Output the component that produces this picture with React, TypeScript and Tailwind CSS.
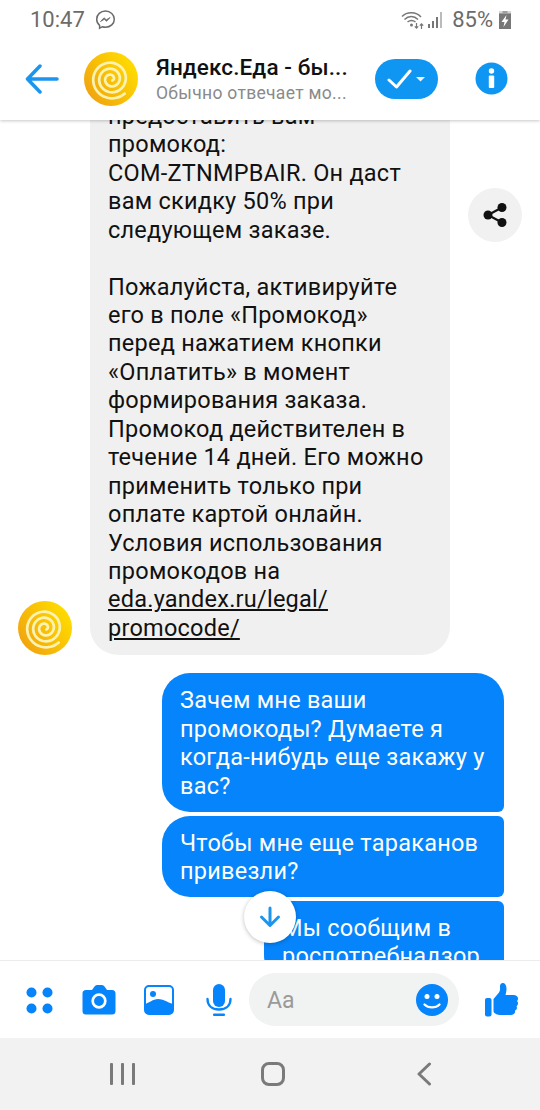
import React from "react";

const BLUE = "#0584fb";

function spiralPath() {
  // Archimedean spiral from the centre outwards, its tail ending low on the right
  const pts: string[] = [];
  const turns = 3;
  const steps = 160;
  const endAngle = Math.PI * 0.26;
  for (let i = 0; i <= steps; i++) {
    const t = i / steps;
    const a = endAngle + (1 - t) * turns * Math.PI * 2;
    const r = 2 + t * 18;
    pts.push(`${(27 + r * Math.cos(a)).toFixed(2)} ${(27 + r * Math.sin(a)).toFixed(2)}`);
  }
  return "M" + pts.join("L");
}

function Avatar({ id }: { id: string }) {
  return (
    <svg width={54} height={54} viewBox="0 0 54 54" className="shrink-0">
      <defs>
        <linearGradient id={id} x1="0.05" y1="0.9" x2="0.95" y2="0.25">
          <stop offset="0" stopColor="#f0a010" />
          <stop offset="1" stopColor="#ffdc00" />
        </linearGradient>
      </defs>
      <circle cx="27" cy="27" r="27" fill={`url(#${id})`} />
      <path d={spiralPath()} fill="none" stroke="#fdf2b0" strokeWidth="2.700" strokeLinecap="round" />
    </svg>
  );
}

function StatusBar() {
  return (
    <div className="h-[37px] flex items-center pl-[30px] pr-[28px] pt-[2px] text-[#6b6b6b] text-[22px] leading-none">
      <span>10:47</span>
      <svg width="21" height="21" viewBox="0 0 21 21" className="ml-[10px]">
        <path d="M10.5 2C5.5 2 1.7 5.6 1.7 10.2c0 2.5 1.1 4.6 2.9 6.1v2.9l2.7-1.5c1 .3 2.1.5 3.2.5 5 0 8.8-3.6 8.8-8S15.500 2 10.5 2Z" fill="none" stroke="#6b6b6b" strokeWidth="1.500" />
        <path d="m5.500 12.500 3.500-3.700 2.300 2 3.800-2.300-3.500 3.800-2.300-2-3.800 2.200Z" fill="#6b6b6b" stroke="#6b6b6b" strokeWidth="0.800" strokeLinejoin="round" />
      </svg>
      <div className="ml-auto flex items-center">
        <svg width="24" height="20" viewBox="0 0 24 20">
          <g fill="none" stroke="#777" strokeWidth="1.500">
            <path d="M1 6.500C6 1.500 15 1.500 20 7" />
            <path d="M3.500 9.500C7.500 5.500 13 5.500 17 9.500" />
            <path d="M6.500 12C9 10 12 10 14.500 12" />
          </g>
          <circle cx="10.500" cy="15" r="1.500" fill="#777" />
          <path d="M15.500 13v5M13.800 16.300l1.700 1.900 1.700-1.900M20.500 19v-5M18.800 15.700l1.700-1.900 1.700 1.900" fill="none" stroke="#777" strokeWidth="1.200" />
        </svg>
        <svg width="16" height="18" viewBox="0 0 16 18" className="ml-[2px]">
          <rect x="1" y="13" width="2" height="4" fill="#777" />
          <rect x="5" y="10" width="2" height="7" fill="#777" />
          <rect x="9" y="6" width="2" height="11" fill="#777" />
          <rect x="13" y="1" width="2" height="16" fill="#bbb" />
        </svg>
        <span className="ml-[9px]">85%</span>
        <svg width="14" height="20" viewBox="0 0 14 20" className="ml-[5px]">
          <path d="M4.500 1h5v2H13v16H1V3h3.500Z" fill="#777" />
          <path d="M1 1h12v3H1Z" fill="#bbb" opacity="0.600" />
          <path d="M8.500 5 3.500 12h3l-1 5 5-7.500h-3Z" fill="#fff" />
        </svg>
      </div>
    </div>
  );
}

function Header() {
  return (
    <div className="relative z-10 bg-white shadow-[0_1px_3px_rgba(0,0,0,0.22)]">
      <StatusBar />
      <div className="h-[83px] flex items-center">
        <svg width="34" height="30" viewBox="0 0 34 30" className="ml-[25px]">
          <path d="M32 15H3M15 2 2.500 15 15 28" fill="none" stroke="#1b95ee" strokeWidth="3.500" strokeLinecap="round" strokeLinejoin="round" />
        </svg>
        <div className="ml-[25px]"><Avatar id="spiral-head" /></div>
        <div className="ml-[18px] w-[219px]">
          <div className="text-[22.500px] leading-[28px] font-medium text-[#111] whitespace-nowrap tracking-[0.1px]">Яндекс.Еда - бы...</div>
          <div className="text-[17.500px] leading-[24px] text-[#8a8a8a] whitespace-nowrap tracking-[0.3px]">Обычно отвечает мо...</div>
        </div>
        <div className="w-[63px] h-[40px] rounded-full bg-[#0f96f2] flex items-center justify-center">
          <svg width="40" height="24" viewBox="0 0 40 24">
            <path d="M2 13l7.500 7L23 4" fill="none" stroke="#fff" strokeWidth="3" strokeLinecap="round" strokeLinejoin="round" />
            <path d="M29 10h9l-4.500 4.500Z" fill="#e8f4ff" />
          </svg>
        </div>
        <svg width="33" height="33" viewBox="0 0 33 33" className="ml-[37px]">
          <circle cx="16.500" cy="16.500" r="16" fill="#0f96f2" />
          <circle cx="16.500" cy="9" r="2.700" fill="#fff" />
          <rect x="13.800" y="13.500" width="5.400" height="12.500" rx="1" fill="#fff" />
        </svg>
      </div>
    </div>
  );
}

function Share() {
  return (
    <div className="ml-[18px] mt-[87px] w-[54px] h-[54px] rounded-full bg-[#f1f1f1] flex items-center justify-center">
      <svg width="26" height="26" viewBox="0 0 26 26">
        <circle cx="20" cy="5.500" r="4.500" fill="#111" />
        <circle cx="6" cy="13" r="4.500" fill="#111" />
        <circle cx="20" cy="20.500" r="4.500" fill="#111" />
        <path d="M20 5.500 6 13l14 7.500" fill="none" stroke="#111" strokeWidth="2.200" />
      </svg>
    </div>
  );
}

function Messages() {
  return (
    <div className="relative flex-1 min-h-0 overflow-hidden bg-white">
      <div className="mt-[-19px] text-[23.500px] leading-[28.430px] tracking-[0.24px]">
        <div className="flex">
          <div className="ml-[18px] w-[54px] shrink-0 self-end"><Avatar id="spiral-msg" /></div>
          <div className="ml-[18px] w-[360px] shrink-0 rounded-b-[28px] bg-[#f0f0f0] pl-[18px] pr-[14px] pt-[1px] pb-[13px] text-[#111]">
            <div className="whitespace-nowrap">предоставить вам</div>
            <div className="whitespace-nowrap">промокод:</div>
            <div className="whitespace-nowrap">COM-ZTNMPBAIR. Он даст</div>
            <div className="whitespace-nowrap">вам скидку 50% при</div>
            <div className="whitespace-nowrap">следующем заказе.</div>
            <div className="h-[28.430px]" />
            <div className="whitespace-nowrap">Пожалуйста, активируйте</div>
            <div className="whitespace-nowrap">его в поле «Промокод»</div>
            <div className="whitespace-nowrap">перед нажатием кнопки</div>
            <div className="whitespace-nowrap">«Оплатить» в момент</div>
            <div className="whitespace-nowrap">формирования заказа.</div>
            <div className="whitespace-nowrap">Промокод действителен в</div>
            <div className="whitespace-nowrap">течение 14 дней. Его можно</div>
            <div className="whitespace-nowrap">применить только при</div>
            <div className="whitespace-nowrap">оплате картой онлайн.</div>
            <div className="whitespace-nowrap">Условия использования</div>
            <div className="whitespace-nowrap">промокодов на</div>
            <div className="whitespace-nowrap underline">eda.yandex.ru/legal/</div>
            <div className="whitespace-nowrap underline">promocode/</div>
          </div>
          <Share />
        </div>
        <div className="mt-[18px] flex flex-col items-end gap-[3.500px] pr-[36px] text-white">
          <div className="w-[342px] rounded-l-[28px] rounded-tr-[28px] rounded-br-[6px] bg-[#0584fb] pl-[18px] pt-[13px] pb-[12px]">
            <div className="whitespace-nowrap">Зачем мне ваши</div>
            <div className="whitespace-nowrap">промокоды? Думаете я</div>
            <div className="whitespace-nowrap">когда-нибудь еще закажу у</div>
            <div className="whitespace-nowrap">вас?</div>
          </div>
          <div className="w-[342px] rounded-l-[28px] rounded-r-[6px] bg-[#0584fb] pl-[18px] pt-[13px] pb-[12px]">
            <div className="whitespace-nowrap">Чтобы мне еще тараканов</div>
            <div className="whitespace-nowrap">привезли?</div>
          </div>
          <div className="w-[240px] rounded-l-[28px] rounded-tr-[6px] bg-[#0584fb] pl-[18px] pt-[13px] pb-[12px]">
            <div className="whitespace-nowrap">Мы сообщим в</div>
            <div className="whitespace-nowrap">роспотребнадзор</div>
          </div>
        </div>
      </div>
      <div className="absolute left-[244px] top-[771px] w-[52px] h-[52px] rounded-full bg-white shadow-[0_1px_4px_rgba(0,0,0,0.25)] flex items-center justify-center">
        <svg width="22" height="22" viewBox="0 0 22 22">
          <path d="M11 2v17M2.500 11l8.500 8.500 8.500-8.500" fill="none" stroke="#1b95ee" strokeWidth="3" strokeLinecap="round" strokeLinejoin="round" />
        </svg>
      </div>
    </div>
  );
}

function Composer() {
  return (
    <div className="relative z-10 h-[78px] bg-white border-t border-[#ececec] flex items-center shrink-0">
      <svg width="28" height="28" viewBox="0 0 28 28" className="ml-[25px]">
        <circle cx="6.500" cy="6.500" r="5" fill={BLUE} />
        <circle cx="22.500" cy="6.500" r="5" fill={BLUE} />
        <circle cx="6.500" cy="22.500" r="5" fill={BLUE} />
        <circle cx="22.500" cy="22.500" r="5" fill={BLUE} />
      </svg>
      <svg width="34" height="30" viewBox="0 0 34 30" className="ml-[29px]">
        <path d="M3 5h7l2.500-3.500Q13.500 0 15 0h5q1.500 0 2.500 1.500L25 5h5q3.500 0 3.500 3.500V26q0 3.500-3.500 3.500H4Q.5 29.500.5 26V8.500Q.5 5 4 5Z" fill={BLUE} />
        <circle cx="17" cy="16" r="6.300" fill="none" stroke="#fff" strokeWidth="2.700" />
      </svg>
      <svg width="30" height="30" viewBox="0 0 30 30" className="ml-[28px]">
        <rect x="1" y="1" width="28" height="28" rx="4" fill="none" stroke={BLUE} strokeWidth="2" />
        <circle cx="9" cy="9" r="3" fill={BLUE} />
        <path d="M1 19c4-1 8-5 13-5s9 3 15 5v6q0 4-4 4H5q-4 0-4-4Z" fill={BLUE} />
      </svg>
      <svg width="26" height="32" viewBox="0 0 26 32" className="ml-[32px]">
        <rect x="7" y="0" width="12" height="23" rx="6" fill={BLUE} />
        <path d="M1.500 15c0 7 5 10.500 11.500 10.500S24.500 22 24.500 15" fill="none" stroke={BLUE} strokeWidth="2.300" strokeLinecap="round" />
        <rect x="7" y="29.500" width="12" height="2.500" rx="1" fill={BLUE} />
      </svg>
      <div className="ml-[17px] w-[210px] h-[53px] rounded-full bg-[#f1f2f2] flex items-center pl-[18px] pr-[11px]">
        <span className="mt-[3px] text-[23px] text-[#9a9a9a]">Aa</span>
        <svg width="32" height="32" viewBox="0 0 32 32" className="ml-auto">
          <circle cx="16" cy="16" r="16" fill={BLUE} />
          <circle cx="11" cy="12.500" r="2.500" fill="#fff" />
          <circle cx="21" cy="12.500" r="2.500" fill="#fff" />
          <path d="M8.500 20.500c4 3.800 11 3.800 15 0" fill="none" stroke="#fff" strokeWidth="2.300" strokeLinecap="round" />
        </svg>
      </div>
      <svg width="33" height="34" viewBox="0 0 33 34" className="ml-[26px]">
        <rect x="0" y="15" width="6.500" height="18.500" rx="2" fill={BLUE} />
        <path d="M8.500 16 14 9.500c1-1.500 1.200-3 1-5.500-.2-2.500 1-4 2.800-4 2 0 3.700 2 3.700 5.500 0 2.500-.5 4.500-1 6.500h8c2.500 0 4.500 1.500 4.500 3.500 0 1-.3 2-1 2.500.8.800 1.100 1.600 1 2.500 0 1.200-.7 2.200-1.500 2.700.4.700.5 1.400.4 2.100-.2 1.200-1 2-2 2.500.2.600.2 1.200 0 1.800-.5 1.500-2 2.400-4 2.400H16c-3.500 0-7.500-1.500-7.500-4Z" fill={BLUE} />
      </svg>
    </div>
  );
}

function NavBar() {
  return (
    <div className="h-[72px] bg-[#f2f2f2] flex items-center shrink-0">
      <div className="ml-[110px] flex gap-[8px]">
        <div className="w-[3px] h-[22px] rounded-[1px] bg-[#7a7a7a]" />
        <div className="w-[3px] h-[22px] rounded-[1px] bg-[#7a7a7a]" />
        <div className="w-[3px] h-[22px] rounded-[1px] bg-[#7a7a7a]" />
      </div>
      <div className="ml-[126px] w-[24px] h-[24px] rounded-[8px] border-[3px] border-[#7a7a7a]" />
      <svg width="16" height="24" viewBox="0 0 16 24" className="ml-[131px]">
        <path d="M13.500 2 3 12l10.500 10" fill="none" stroke="#7a7a7a" strokeWidth="3" strokeLinecap="round" strokeLinejoin="round" />
      </svg>
    </div>
  );
}

export default function App() {
  return (
    <div className="w-[540px] h-[1110px] flex flex-col overflow-hidden bg-white font-['Roboto',sans-serif]">
      <Header />
      <Messages />
      <Composer />
      <NavBar />
    </div>
  );
}
